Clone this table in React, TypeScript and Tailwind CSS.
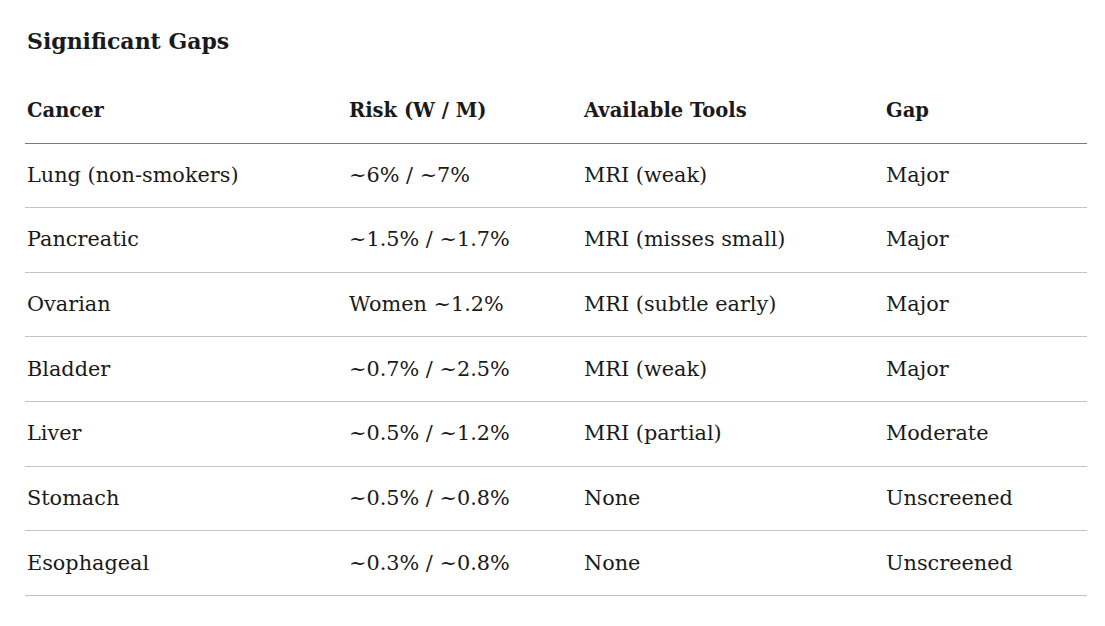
import React from "react";

const rows = [
  ["Lung (non-smokers)", "~6% / ~7%", "MRI (weak)", "Major"],
  ["Pancreatic", "~1.5% / ~1.7%", "MRI (misses small)", "Major"],
  ["Ovarian", "Women ~1.2%", "MRI (subtle early)", "Major"],
  ["Bladder", "~0.7% / ~2.5%", "MRI (weak)", "Major"],
  ["Liver", "~0.5% / ~1.2%", "MRI (partial)", "Moderate"],
  ["Stomach", "~0.5% / ~0.8%", "None", "Unscreened"],
  ["Esophageal", "~0.3% / ~0.8%", "None", "Unscreened"],
];

export default function App() {
  return (
    <div className="w-[1105px] h-[626px] bg-white text-[#1a1a1a] pl-[25px] pr-[18px] pt-[24px] font-['DejaVu_Serif',serif]">
      <h2 className="pl-[2px] text-[22px] leading-[34px] font-bold">Significant Gaps</h2>
      <table className="mt-[21px] w-full table-fixed border-collapse">
        <colgroup>
          <col className="w-[322px]" />
          <col className="w-[235px]" />
          <col className="w-[302px]" />
          <col />
        </colgroup>
        <thead>
          <tr className="h-[64px] border-b border-[#7a7a7a]">
            {["Cancer", "Risk (W / M)", "Available Tools", "Gap"].map((h) => (
              <th key={h} className="pl-[2px] text-left align-middle text-[19.5px] font-bold">
                {h}
              </th>
            ))}
          </tr>
        </thead>
        <tbody>
          {rows.map((r, i) => (
            <tr key={i} className="h-[64.67px] border-b border-[#c4c4c4]">
              {r.map((c, j) => (
                <td key={j} className="pl-[2px] align-middle text-[20.8px]">
                  {c}
                </td>
              ))}
            </tr>
          ))}
        </tbody>
      </table>
    </div>
  );
}
